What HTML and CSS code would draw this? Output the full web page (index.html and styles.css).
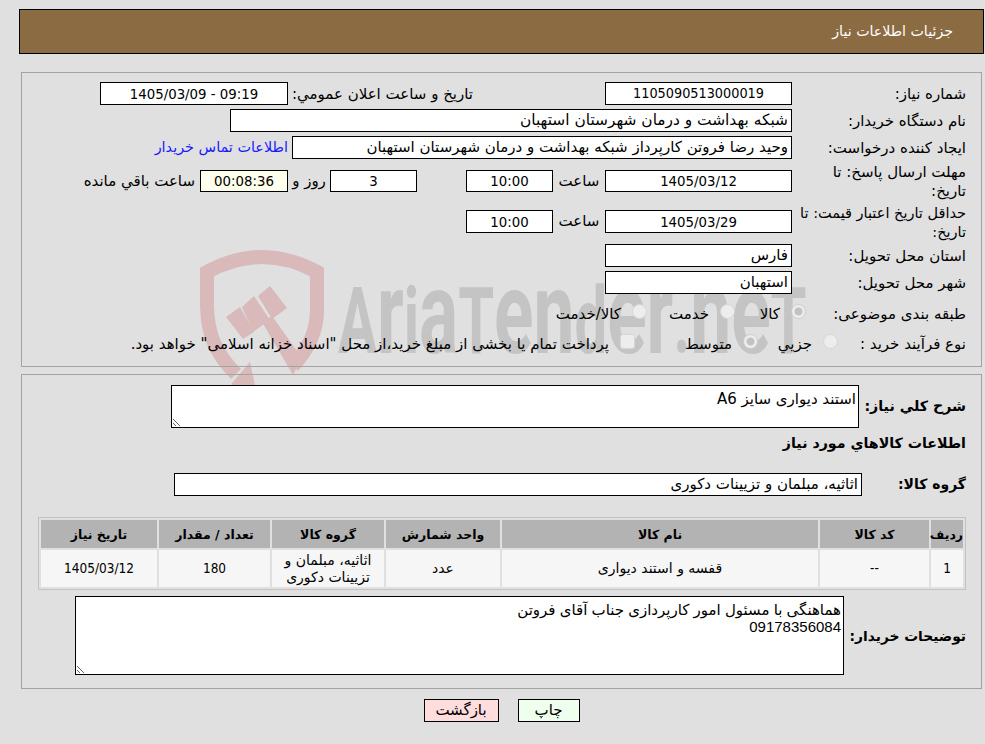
FILE: index.html
```html
<!DOCTYPE html>
<html lang="fa" dir="rtl">
<head>
<meta charset="utf-8">
<title>جزئیات اطلاعات نیاز</title>
<link rel="stylesheet" href="styles.css">
</head>
<body>
<div class="page">
  <header class="title-bar">جزئیات اطلاعات نیاز</header>

  <div class="watermark" aria-hidden="true">
    <svg class="wm-shield" width="135" height="145" viewBox="195 245 135 145">
      <path class="wm-stroke" d="M236 374C216 354 207 334 207 304V272Q262 242 317 272V310C317 334 306 352 293 366"/>
      <path class="wm-fill" d="M250 362L256 390H230L232 383Z"/>
      <path class="wm-fill" d="M270 286L287 308L272 319L258 296Z"/>
      <path class="wm-fill" d="M254 296L270 320L253 332L242 307Z"/>
      <path class="wm-fill" d="M240 307L254 332L243 339L226 317Z"/>
      <path class="wm-fill" d="M262 322L272 316L302 358L293 375Z"/>
    </svg>
    <span class="wm-text" dir="ltr">A<span class="wm-x">r</span>i<span class="wm-x">a</span>T<span class="wm-x">en</span>d<span class="wm-x">er</span>.<span class="wm-x">ne</span>T</span>
  </div>

  <section class="panel panel-top">
    <div class="row">
      <div class="label">شماره نیاز:</div>
      <div class="box w187 center num id">1105090513000019</div>
      <div class="label announce">تاریخ و ساعت اعلان عمومي:</div>
      <div class="box w188 center num">09:19 - 1405/03/09</div>
    </div>
    <div class="row gap4">
      <div class="label">نام دستگاه خریدار:</div>
      <div class="box w562">شبکه بهداشت و درمان شهرستان استهبان</div>
    </div>
    <div class="row gap4">
      <div class="label">ایجاد کننده درخواست:</div>
      <div class="box w500">وحید رضا فروتن کارپرداز شبکه بهداشت و درمان شهرستان استهبان</div>
      <a class="contact" href="#">اطلاعات تماس خریدار</a>
    </div>
    <div class="row row-tall gap3">
      <div class="label">مهلت ارسال پاسخ: تا تاریخ:</div>
      <div class="box w187 short center num">1405/03/12</div>
      <div class="unit w52">ساعت</div>
      <div class="box w87 short center num">10:00</div>
      <div class="spacer49"></div>
      <div class="box w87 short center num">3</div>
      <div class="unit w42">روز و</div>
      <div class="box w88 short center num timer">00:08:36</div>
      <div class="unit remain">ساعت باقي مانده</div>
    </div>
    <div class="row row-tall row-tall-b gap3">
      <div class="label label-long">حداقل تاریخ اعتبار قیمت: تا تاریخ:</div>
      <div class="box w187 center num">1405/03/29</div>
      <div class="unit w52">ساعت</div>
      <div class="box w87 center num">10:00</div>
    </div>
    <div class="row gap4">
      <div class="label">استان محل تحویل:</div>
      <div class="box w187">فارس</div>
    </div>
    <div class="row gap4">
      <div class="label">شهر محل تحویل:</div>
      <div class="box w187">استهبان</div>
    </div>
    <div class="row row-choice gap7">
      <div class="label">طبقه بندی موضوعی:</div>
      <label class="choice c-kala"><input type="radio" name="cat" checked disabled><span>کالا</span></label>
      <label class="choice c-khed"><input type="radio" name="cat" disabled><span>خدمت</span></label>
      <label class="choice"><input type="radio" name="cat" disabled><span>کالا/خدمت</span></label>
    </div>
    <div class="row row-choice gap6">
      <div class="label">نوع فرآیند خرید :</div>
      <label class="choice c-jozi"><input type="radio" name="proc" disabled><span>جزيي</span></label>
      <label class="choice c-mot"><input type="radio" name="proc" checked disabled><span>متوسط</span></label>
      <label class="choice"><input type="checkbox" disabled><span>پرداخت تمام یا بخشی از مبلغ خرید،از محل "اسناد خزانه اسلامی" خواهد بود.</span></label>
    </div>
  </section>

  <section class="panel panel-bottom">
    <div class="row">
      <div class="strong desc-label">شرح کلي نیاز:</div>
      <textarea class="area area-desc" readonly>استند دیواری سایز A6</textarea>
    </div>
    <h2 class="strong section-title">اطلاعات کالاهاي مورد نیاز</h2>
    <div class="row group-row">
      <div class="strong group-label">گروه کالا:</div>
      <div class="box w688">اثاثیه، مبلمان و تزیینات دکوری</div>
    </div>
    <table class="items">
      <thead>
        <tr>
          <th class="c1">ردیف</th>
          <th class="c2">کد کالا</th>
          <th class="c3">نام کالا</th>
          <th class="c4">واحد شمارش</th>
          <th class="c5">گروه کالا</th>
          <th class="c6">تعداد / مقدار</th>
          <th class="c7">تاریخ نیاز</th>
        </tr>
      </thead>
      <tbody>
        <tr>
          <td class="cell-num">1</td>
          <td class="cell-num">--</td>
          <td>قفسه و استند دیواری</td>
          <td>عدد</td>
          <td>اثاثیه، مبلمان و تزیینات دکوری</td>
          <td class="cell-num">180</td>
          <td class="cell-num">1405/03/12</td>
        </tr>
      </tbody>
    </table>
    <div class="row notes-row">
      <div class="strong notes-label">توضیحات خریدار:</div>
      <textarea class="area area-notes" readonly>هماهنگی با مسئول امور کارپردازی جناب آقای فروتن
09178356084</textarea>
    </div>
  </section>

  <div class="actions">
    <button class="btn btn-back" type="button">بازگشت</button>
    <button class="btn btn-print" type="button">چاپ</button>
  </div>
</div>
</body>
</html>
```
FILE: styles.css
```css
* { box-sizing: border-box; }
html, body { margin: 0; height: 100%; overflow: hidden; }
body {
  background: #e0e0e0;
  color: #000;
  font-family: "DejaVu Sans", sans-serif;
  font-size: 15px;
  line-height: 19px;
}
.page { position: relative; padding: 9px 1px 0 19px; }
.title-bar {
  height: 45px;
  background: #8b6b42;
  border: 1px solid #000;
  color: #fff;
  font-size: 14.2px;
  line-height: 43px;
  padding-right: 30px;
}
.watermark { position: absolute; left: 0; top: 0; width: 985px; height: 395px; overflow: hidden; }
.wm-shield { position: absolute; left: 195px; top: 245px; }
.wm-stroke { fill: none; stroke: #d9b9b9; stroke-width: 14; }
.wm-fill { fill: #d9b9b9; }
.wm-text {
  position: absolute;
  left: 338px;
  top: 258px;
  font-family: Roboto, sans-serif;
  font-weight: 700;
  font-size: 92px;
  line-height: 110px;
  color: #c4c4c4;
  white-space: nowrap;
  transform-origin: left top;
  transform: scaleX(0.63);
}
.wm-x { font-size: 116px; line-height: 110px; }
.panel { position: relative; border: 1px solid #a3a3a3; margin: 0 2px; }
.panel-top { margin-top: 18px; height: 295px; padding: 9px 15px 0 0; }
.panel-bottom { margin-top: 7px; height: 315px; padding: 10px 15px 0 0; }
.row { display: flex; align-items: center; }
.gap3 { margin-top: 3px; }
.gap4 { margin-top: 4px; }
.gap6 { margin-top: 6px; }
.gap7 { margin-top: 7px; }
.row-tall { height: 38px; }
.row-tall-b { height: 37px; }
.row-choice { height: 24px; }
.label { width: 174px; flex: none; padding: 2px 0 0 4px; }
.label-long { padding-left: 0; font-size: 14.5px; }
.label.announce { width: 317px; padding: 2px 132px 0 0; }
.box {
  flex: none;
  height: 23px;
  background: #fff;
  border: 1px solid #000;
  line-height: 21px;
  padding: 0 3px;
  white-space: nowrap;
  overflow: hidden;
}
.box.short { height: 22px; line-height: 20px; }
.center { text-align: center; }
.num { font-family: "DejaVu Sans Condensed", "DejaVu Sans", sans-serif; font-size: 14.8px; }
.num.id { font-size: 14.3px; }
.w187 { width: 187px; }
.w188 { width: 188px; }
.w87 { width: 87px; }
.w88 { width: 88px; }
.w500 { width: 500px; }
.w562 { width: 562px; font-size: 15.4px; }
.w688 { width: 688px; }
.timer { background: #ffffee; }
.unit { flex: none; text-align: center; }
.w52 { width: 52px; }
.w42 { width: 42px; }
.remain { margin-right: 5px; }
.spacer49 { width: 49px; flex: none; }
.contact { margin-right: 4px; color: #1a1aff; font-size: 14.4px; text-decoration: none; }
.choice { display: flex; align-items: center; white-space: nowrap; }
.choice span { padding-top: 2px; }
.choice input {
  appearance: none;
  flex: none;
  width: 15px;
  height: 15px;
  margin: 0 0 4px 11px;
  background: #ededed;
  border: 1px solid #d6d6d6;
  border-radius: 50%;
}
.choice input:checked { background: radial-gradient(circle, #c2c2c2 0 3.5px, #ededed 4.5px); border-color: #cfcfcf; }
.choice input[type="checkbox"] { border-radius: 3px; }
.c-kala { width: 71px; margin-right: -14px; }
.c-khed { width: 88px; }
.c-jozi { width: 80px; margin-right: -46px; }
.c-mot { width: 123px; }
.strong { font-weight: 700; font-size: 14.2px; margin: 0; }
.desc-label { width: 107px; flex: none; }
.area {
  display: block;
  background: #fff;
  border: 1px solid #000;
  border-radius: 0;
  color: #000;
  font: inherit;
  line-height: 17px;
  padding: 5px 2px 2px;
  outline: none;
  overflow: hidden;
  resize: both;
}
.area-desc { width: 688px; height: 43px; }
.section-title { margin-top: 2px; height: 26px; line-height: 26px; }
.group-row { margin-top: 17px; }
.group-label { width: 104px; flex: none; font-size: 14px; }
.items {
  margin: 21px 0 0;
  width: 928px;
  border: 1px solid #c2c2c2;
  border-spacing: 2px;
  table-layout: fixed;
  text-align: center;
}
.items th { height: 28px; padding: 0; background: #b3b3b3; font-size: 12.5px; }
.items td { height: 37px; padding: 0 12px; background: #f6f6f6; font-size: 14px; line-height: 17px; }
.items .cell-num { font-family: "DejaVu Sans Condensed", "DejaVu Sans", sans-serif; font-size: 13.5px; }
.c1 { width: 32px; }
.c2 { width: 109px; }
.c3 { width: 316px; }
.c4 { width: 114px; }
.c5 { width: 112px; }
.c6 { width: 111px; }
.c7 { width: 116px; }
.notes-row { margin-top: 6px; }
.notes-label { width: 122px; flex: none; font-size: 13.8px; padding-top: 2px; }
.area-notes { width: 769px; height: 79px; padding-top: 4px; font-family: "Liberation Sans", "DejaVu Sans", sans-serif; }
.actions { display: flex; justify-content: center; gap: 19px; margin-top: 10px; direction: ltr; }
.btn {
  height: 23px;
  border: 1px solid #000;
  border-radius: 0;
  color: #000;
  font: inherit;
  line-height: 21px;
  padding: 0;
}
.btn-print { width: 62px; background: #eeffee; }
.btn-back { width: 75px; background: #ffdddd; }
```
